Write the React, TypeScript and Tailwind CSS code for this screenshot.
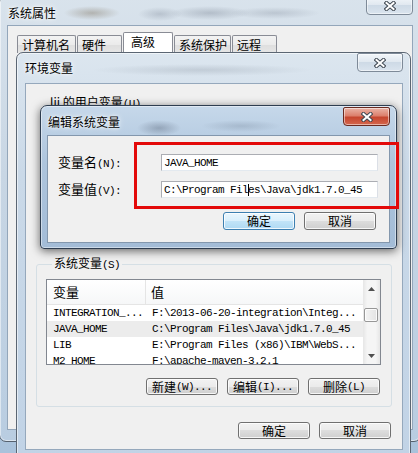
import React from "react";

const mono = "font-['Liberation_Mono','Noto_Sans_CJK_SC',monospace] text-[11px] tracking-[-0.6px]";

function M({ children }: { children: React.ReactNode }) {
    return <span className={mono}>{children}</span>;
}

function CloseX() {
    return (
        <svg width="12" height="10" viewBox="0 0 12 10">
            <path d="M2.5 2L9.5 8M9.5 2L2.5 8" stroke="#3f4852" strokeWidth="4" strokeLinecap="square" />
            <path d="M2.5 2L9.5 8M9.5 2L2.5 8" stroke="#ffffff" strokeWidth="2" strokeLinecap="square" />
        </svg>
    );
}

function CloseBtn({ active = false, w = "w-[47px]" }: { active?: boolean; w?: string }) {
    return (
        <div
            className={`flex h-[19px] ${w} items-center justify-center rounded-t-[2px] rounded-b-[4px] border shadow-[inset_0_0_0_1px_rgba(255,255,255,0.5)] ${
                active
                    ? "border-[#6a2a20] bg-[linear-gradient(to_bottom,#eab3a6_0%,#dc806d_45%,#c6462f_55%,#d4674d_100%)]"
                    : "border-[#7e8a98] bg-[linear-gradient(to_bottom,#f2f6fa_0%,#dfe7ef_50%,#cedae6_50%,#dae4ee_100%)]"
            }`}
        >
            <CloseX />
        </div>
    );
}

function Btn({ children, def = false, w = "w-[72px]" }: { children: React.ReactNode; def?: boolean; w?: string }) {
    return (
        <button
            type="button"
            className={`flex h-full ${w} items-center justify-center rounded-[3px] border leading-[16px] shadow-[inset_0_0_0_1px_rgba(255,255,255,0.8)] ${
                def
                    ? "border-[#3c7fb1] bg-[linear-gradient(to_bottom,#eaf6fd_0%,#d9effc_50%,#c2e4f8_50%,#afd9f3_100%)]"
                    : "border-[#707070] bg-[linear-gradient(to_bottom,#f2f2f2_0%,#ebebeb_50%,#dddddd_50%,#cfcfcf_100%)]"
            }`}
        >
            {children}
        </button>
    );
}

function Arrow({ up }: { up?: boolean }) {
    return (
        <svg width="7" height="4" viewBox="0 0 7 4">
            <path d={up ? "M0 4L3.5 0L7 4Z" : "M0 0L3.5 4L7 0Z"} fill="#4f4f4f" />
        </svg>
    );
}

const rows = [
    { name: "INTEGRATION_...", value: "F:\\2013-06-20-integration\\Integ..." },
    { name: "JAVA_HOME", value: "C:\\Program Files\\Java\\jdk1.7.0_45", sel: true },
    { name: "LIB", value: "E:\\Program Files (x86)\\IBM\\WebS..." },
    { name: "M2_HOME", value: "F:\\apache-maven-3.2.1" },
];

const tabs = [
    { label: "计算机名", w: "w-[59px]" },
    { label: "硬件", w: "w-[45px]" },
    { label: "高级", w: "w-[50px]", active: true },
    { label: "系统保护", w: "w-[57px]" },
    { label: "远程", w: "w-[45px]" },
];

export default function App() {
    return (
        <div className="relative h-[453px] w-[418px] overflow-hidden bg-[linear-gradient(to_bottom,#c9d7e4,#a9c2db)] font-['Noto_Sans_CJK_SC',sans-serif] text-[12px] leading-[16px] text-black">
            {/* 系统属性 */}
            <div className="absolute left-[-1px] top-[-5px] flex h-[447px] w-[422px] flex-col rounded-[7px] border border-[#56616e] bg-[radial-gradient(28px_7px_at_92px_17px,rgba(90,70,40,0.3),transparent),radial-gradient(22px_7px_at_160px_18px,rgba(60,70,90,0.2),transparent),radial-gradient(40px_7px_at_210px_17px,rgba(50,60,80,0.22),transparent),radial-gradient(45px_6px_at_275px_17px,rgba(60,70,90,0.18),transparent),linear-gradient(to_bottom,#d9e3ec,#c8d6e4_40%,#b9cde1)] px-[7px] pb-[11px] shadow-[inset_0_0_0_1px_rgba(255,255,255,0.5)]">
                <div className="flex h-[29px] shrink-0 items-start justify-between">
                    <span className="mt-[9px] pl-[1px] [text-shadow:0_0_6px_#fff,0_0_3px_#fff]">系统属性</span>
                    <CloseBtn />
                </div>
                <div className="flex flex-1 flex-col border border-[#93a6ba] bg-[#f0f0f0] pl-[9px] pt-[6px]">
                    <div className="flex h-[21px] items-end gap-px">
                        {tabs.map((t) => (
                            <div
                                key={t.label}
                                className={`flex ${t.w} items-center rounded-t-[2px] border border-b-0 border-[#898c95] ${
                                    t.active ? "h-[21px] bg-white pb-[3px] pl-[7px]" : "h-[18px] bg-[linear-gradient(to_bottom,#f3f3f3_0%,#ebebeb_50%,#dedede_50%,#e6e6e6_100%)] pl-[4px]"
                                }`}
                            >
                                {t.label}
                            </div>
                        ))}
                    </div>
                </div>
            </div>

            {/* 环境变量 */}
            <div className="absolute left-[16px] top-[52px] flex h-[406px] w-[395px] flex-col rounded-t-[7px] border border-[#5b6673] bg-[radial-gradient(110px_6px_at_185px_17px,rgba(70,80,95,0.16),transparent),linear-gradient(to_bottom,#dce6ef,#cad9e8_30%,#c1d3e6)] pl-[8px] pr-[7px] pb-[7px] shadow-[inset_0_0_0_1px_rgba(255,255,255,0.55)]">
                <div className="flex h-[30px] shrink-0 items-start justify-between">
                    <span className="mt-[7px] [text-shadow:0_0_6px_#fff,0_0_3px_#fff]">环境变量</span>
                    <CloseBtn w="w-[46px]" />
                </div>
                <div className="flex flex-1 flex-col border border-[#95a8bc] bg-[#f0f0f0]">
                    <div className="h-[171px] shrink-0 pl-[24px] pt-[10px]">
                        lij 的用户变量<M>(U)</M>
                    </div>
                    <fieldset className="mx-[10px] rounded-[3px] border border-[#d5dfe5] pb-[11px] pl-[9px] pr-[10px] pt-[6px]">
                        <legend className="ml-[6px] px-[2px] leading-[16px]">
                            系统变量<M>(S)</M>
                        </legend>
                        <div className="flex h-[86px] border border-[#828790] bg-white">
                            <div className="flex flex-1 flex-col overflow-hidden">
                                <div className="flex h-[25px] shrink-0 border-b border-[#e5e5e5] bg-[linear-gradient(to_bottom,#ffffff,#f6f7f8)] text-[13px]">
                                    <div className="flex w-[99px] items-center border-r border-[#e5e5e5] pl-[6px]">变量</div>
                                    <div className="flex items-center pl-[5px]">值</div>
                                </div>
                                {rows.map((r) => (
                                    <div key={r.name} className={`flex h-[16px] shrink-0 items-center ${r.sel ? "bg-[#ececec]" : ""} ${mono}`}>
                                        <div className="w-[99px] shrink-0 pl-[6px]">{r.name}</div>
                                        <div className="whitespace-nowrap pl-[6px]">{r.value}</div>
                                    </div>
                                ))}
                            </div>
                            <div className="flex w-[17px] shrink-0 flex-col bg-[linear-gradient(to_right,#e6e6e6,#f5f5f5_25%,#f5f5f5_75%,#e6e6e6)]">
                                <div className="flex h-[17px] items-center justify-center">
                                    <Arrow up />
                                </div>
                                <div className="ml-[1px] mt-[11px] h-[14px] w-[14px] rounded-[2px] border border-[#979797] bg-[linear-gradient(to_right,#f4f4f4,#e3e3e3)] shadow-[inset_0_0_0_1px_rgba(255,255,255,0.8)]" />
                                <div className="flex-1" />
                                <div className="flex h-[17px] items-center justify-center">
                                    <Arrow />
                                </div>
                            </div>
                        </div>
                        <div className="mt-[13px] mr-[1px] flex h-[17px] justify-end gap-[9px]">
                            <Btn>
                                新建<M>(W)...</M>
                            </Btn>
                            <Btn>
                                编辑<M>(I)...</M>
                            </Btn>
                            <Btn>
                                删除<M>(L)</M>
                            </Btn>
                        </div>
                    </fieldset>
                    <div className="mt-[15px] flex h-[17px] justify-end gap-[9px] pr-[11px]">
                        <Btn>确定</Btn>
                        <Btn>取消</Btn>
                    </div>
                </div>
            </div>

            {/* 编辑系统变量 */}
            <div className="absolute left-[40px] top-[105px] flex h-[144px] w-[357px] flex-col rounded-t-[7px] rounded-b-[4px] border border-[#2e3d50] bg-[radial-gradient(22px_8px_at_118px_22px,rgba(40,50,70,0.28),transparent),radial-gradient(40px_6px_at_200px_20px,rgba(60,75,95,0.18),transparent),linear-gradient(to_bottom,#c6d8ea,#aec5dd_40%,#a3bcd7)] px-[6px] pb-[5px] shadow-[0_2px_10px_rgba(0,0,0,0.6),inset_0_0_0_1px_rgba(255,255,255,0.45)]">
                <div className="flex h-[29px] shrink-0 items-start justify-between">
                    <span className="mt-[8px] pl-[1px] [text-shadow:0_0_6px_#fff,0_0_3px_#fff]">编辑系统变量</span>
                    <div className="mt-[1px]">
                        <CloseBtn active />
                    </div>
                </div>
                <div className="flex flex-1 flex-col border border-[#8397ad] bg-[#f0f0f0] pl-[10px] pr-[11px] pt-[18px]">
                    <div className="flex h-[17px] items-center">
                        <div className="w-[103px] shrink-0 text-[13px]">
                            变量名<M>(N):</M>
                        </div>
                        <div className={`flex h-full flex-1 items-center border border-[#abadb3] border-b-[#e3e9ef] border-r-[#dbdfe6] bg-white pl-[2px] ${mono}`}>JAVA_HOME</div>
                    </div>
                    <div className="mt-[10px] flex h-[17px] items-center">
                        <div className="w-[103px] shrink-0 text-[13px]">
                            变量值<M>(V):</M>
                        </div>
                        <div className={`flex h-full flex-1 items-center whitespace-pre border border-[#abadb3] border-b-[#e3e9ef] border-r-[#dbdfe6] bg-white pl-[2px] ${mono}`}>
                            {"C:\\Program Fil"}
                            <span className="-mr-px inline-block h-[12px] w-px bg-black" />
                            {"es\\Java\\jdk1.7.0_45"}
                        </div>
                    </div>
                    <div className="mt-[14px] mr-[2px] flex h-[18px] justify-end gap-[9px]">
                        <Btn def>确定</Btn>
                        <Btn>取消</Btn>
                    </div>
                </div>
            </div>

            {/* red annotation */}
            <div className="absolute left-[134px] top-[142px] h-[67px] w-[265px] border-[3px] border-[#e30a0a]" />
        </div>
    );
}
